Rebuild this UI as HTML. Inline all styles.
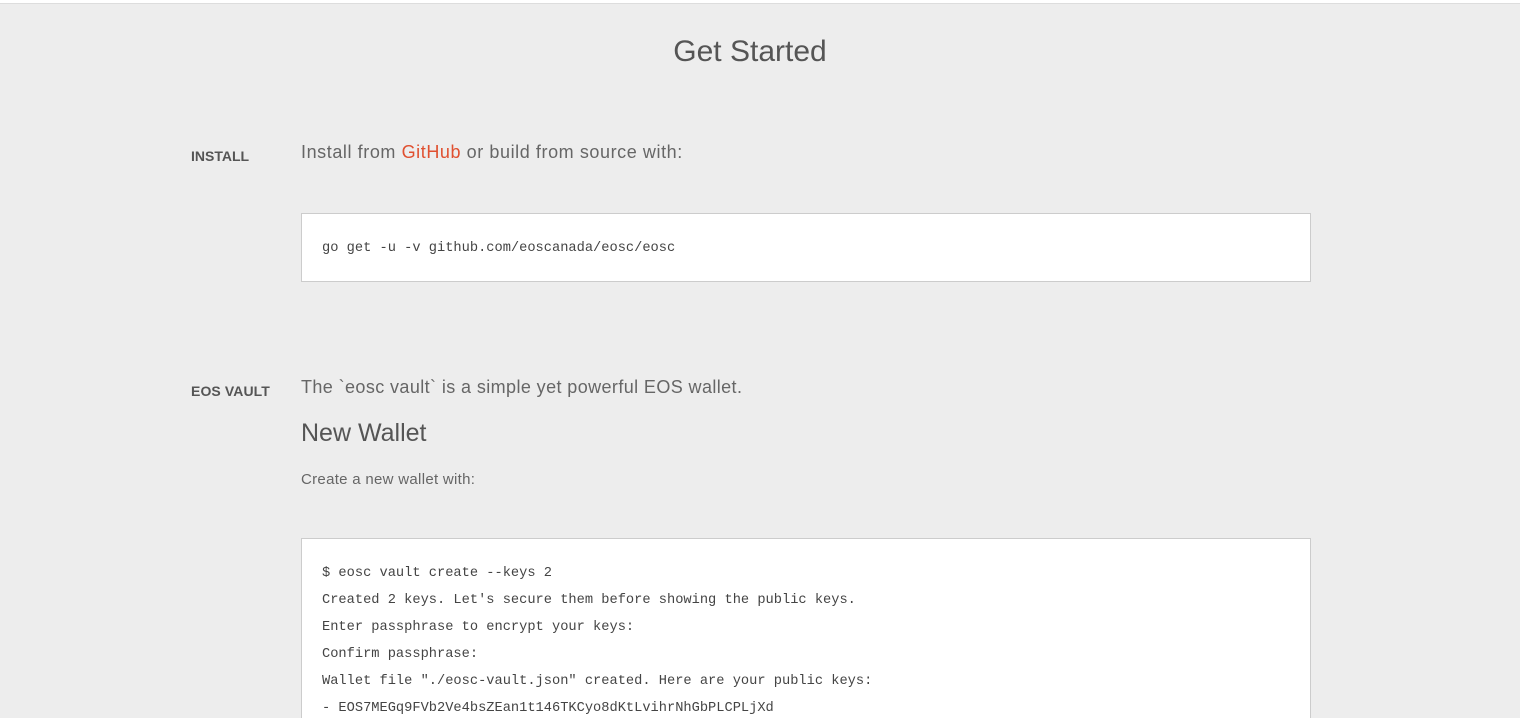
<!DOCTYPE html>
<html><head><meta charset="utf-8"><style>
html,body{margin:0;padding:0;}
html{overflow:hidden;height:718px;}
body{width:1521px;height:718px;overflow:hidden;background:#ededed;position:relative;font-family:"Liberation Sans",sans-serif;color:#666;}
.top{position:absolute;left:0;top:0;width:1521px;height:3px;background:#fff;border-bottom:1px solid #ddd;}
.rt{position:absolute;right:0;top:0;width:1px;height:718px;background:#fff;}
h1{position:absolute;left:0;width:1500px;top:35px;margin:0;text-align:center;font-weight:normal;font-size:30px;color:#555;}
.lbl{position:absolute;left:191px;font-weight:bold;font-size:14px;color:#555;}
.t{position:absolute;left:301px;margin:0;font-size:18px;white-space:nowrap;}
a{color:#e05030;text-decoration:none;}
.box{position:absolute;left:301px;width:1008px;background:#fff;border:1px solid #ccc;}
pre{margin:0;font-family:"Liberation Mono",monospace;font-size:13.7px;line-height:27px;color:#444;position:absolute;left:20px;}
</style></head><body>
<div class="top"></div><div class="rt"></div>
<h1>Get Started</h1>
<div class="lbl" style="top:148px">INSTALL</div>
<p class="t" style="top:142px;letter-spacing:0.58px">Install from <a>GitHub</a> or build from source with:</p>
<div class="box" style="top:213px;height:67px"><pre style="top:21px">go get -u -v github.com/eoscanada/eosc/eosc</pre></div>
<div class="lbl" style="top:383px;letter-spacing:0.1px">EOS VAULT</div>
<p class="t" style="top:377px;letter-spacing:0.4px">The `eosc vault` is a simple yet powerful EOS wallet.</p>
<p class="t" style="top:419px;font-size:25px;color:#555">New Wallet</p>
<p class="t" style="top:471px;font-size:15px;letter-spacing:0.3px">Create a new wallet with:</p>
<div class="box" style="top:538px;height:190px"><pre style="top:21px">$ eosc vault create --keys 2
Created 2 keys. Let's secure them before showing the public keys.
Enter passphrase to encrypt your keys:
Confirm passphrase:
Wallet file "./eosc-vault.json" created. Here are your public keys:
- EOS7MEGq9FVb2Ve4bsZEan1t146TKCyo8dKtLvihrNhGbPLCPLjXd</pre></div>
</body></html>
